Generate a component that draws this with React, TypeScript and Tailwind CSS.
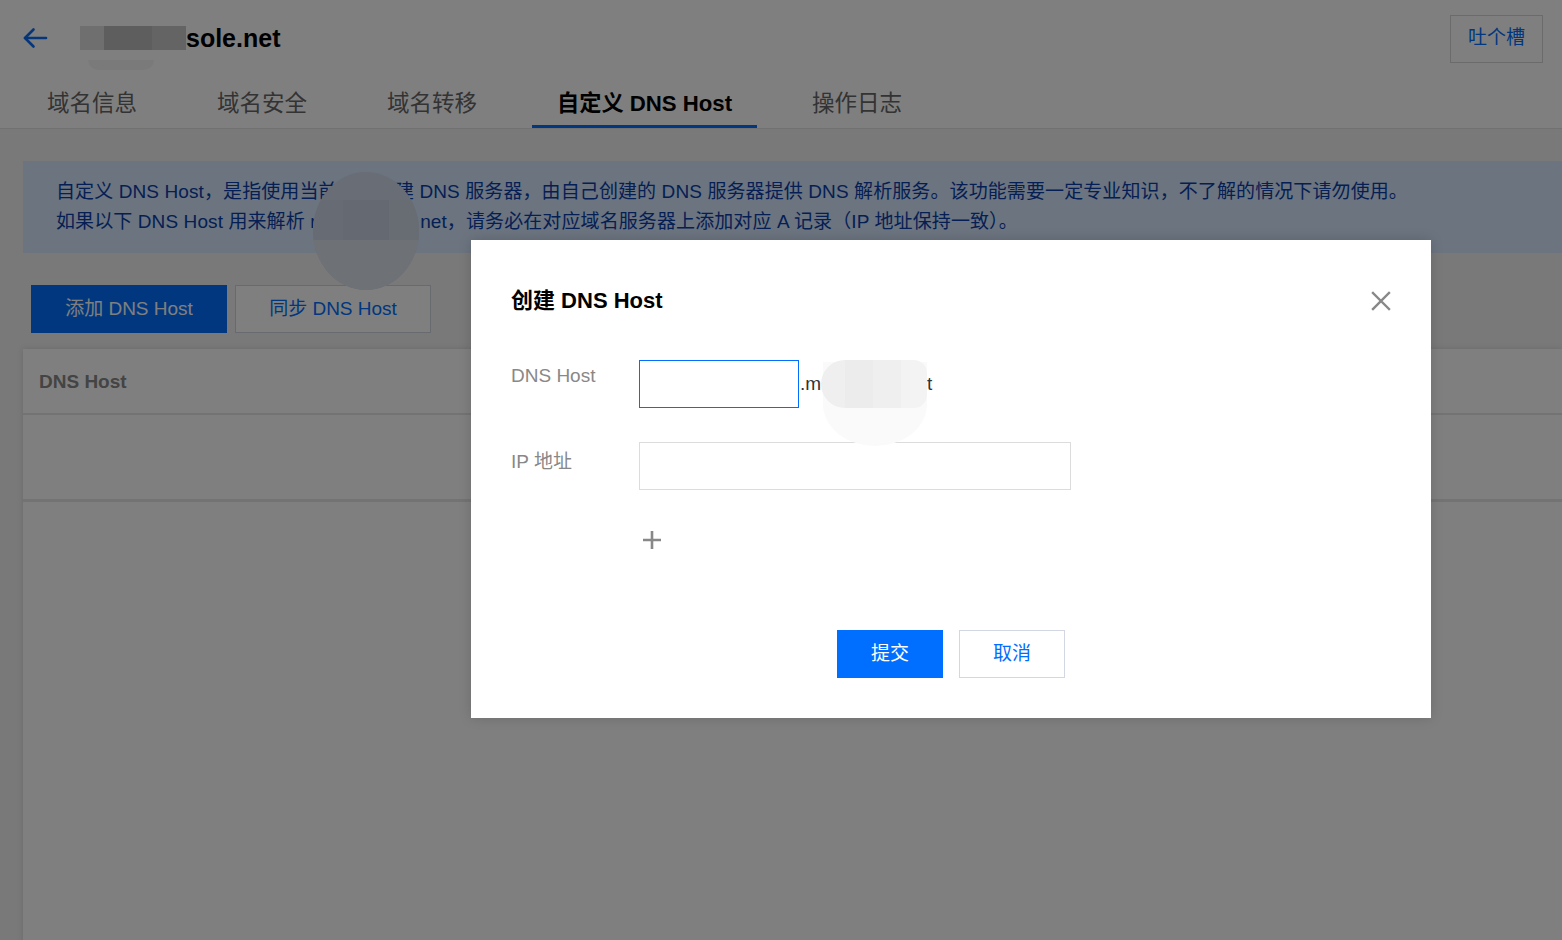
import React from "react";

const F = "font-['Liberation_Sans','Noto_Sans_CJK_SC',sans-serif]";

function Tabs() {
  const tabs = ["域名信息", "域名安全", "域名转移", "自定义 DNS Host", "操作日志"];
  return (
    <div className="flex h-[52px] gap-[30px] pl-[22px]">
      {tabs.map((t, i) => (
        <div
          key={t}
          className={
            i === 3
              ? "flex items-center px-[25px] text-[22.2px] font-bold text-black border-b-[3px] border-[#006eff] pt-[6px]"
              : "flex items-center px-[25px] text-[22.5px] text-[#666] pt-[6px] border-b-[3px] border-transparent"
          }
        >
          {t}
        </div>
      ))}
    </div>
  );
}

export default function App() {
  return (
    <div className={`${F} relative w-full h-[940px] overflow-hidden bg-[#f2f2f2]`}>
      {/* header */}
      <div className="bg-white border-b border-[#e2e2e2] h-[129px] flex flex-col">
        <div className="h-[76px] flex items-center pl-[22px] pr-[19px]">
          <svg width="26" height="22" viewBox="0 0 26 22" fill="none" stroke="#0a6cf5" strokeWidth="2.6" strokeLinecap="round" strokeLinejoin="round">
            <path d="M24 11H3" />
            <path d="M11.5 2.5L3 11l8.5 8.5" />
          </svg>
          <div className="ml-[32px] flex items-center relative">
            <div className="flex h-[24px]">
              <div className="w-[24px] bg-[#dedede]" />
              <div className="w-[48px] bg-[#bcbcbc]" />
              <div className="w-[34px] bg-[#c8c8c8]" />
            </div>
            <span className="text-[25px] font-bold text-black leading-none">sole.net</span>
            <div className="absolute left-[8px] top-[34px] w-[66px] h-[10px] rounded-b-full bg-[#f5f5f5]" />
          </div>
          <div className="ml-auto h-[48px] w-[93px] border border-[#d6d6d6] flex items-center justify-center text-[19px] text-[#006eff] mt-[1px]">
            吐个槽
          </div>
        </div>
        <Tabs />
      </div>

      {/* body */}
      <div className="pl-[23px] pt-[32px] relative">
        <div className="bg-[#d6e8ff] text-[#0a3ea8] text-[19px] leading-[30px] pl-[33px] pt-[16px] pb-[16px] tracking-[0.1px] relative">
          <div className="whitespace-nowrap">
            自定义 DNS Host，是指使用当前域名创建 DNS 服务器，由自己创建的 DNS 服务器提供 DNS 解析服务。该功能需要一定专业知识，不了解的情况下请勿使用。
          </div>
          <div className="whitespace-nowrap">
            如果以下 DNS Host 用来解析 m<span className="inline-block w-[94px]" />net，请务必在对应域名服务器上添加对应 A 记录（IP 地址保持一致）。
          </div>
          <div className="absolute left-[290px] top-[11px] w-[106px] h-[118px] rounded-[50%] bg-[#d2dbea] overflow-hidden flex flex-col">
            <div className="flex h-[40px] mt-[28px]">
              <div className="w-[30px] bg-[#cfd8e8]" />
              <div className="w-[46px] bg-[#cbd4e4]" />
              <div className="w-[30px] bg-[#d0d8e7]" />
            </div>
            <div className="flex-1 bg-[#dde2ea]" />
          </div>
        </div>

        <div className="flex gap-[8px] mt-[32px] ml-[8px]">
          <div className="w-[196px] h-[48px] bg-[#006eff] text-white text-[19px] flex items-center justify-center">添加 DNS Host</div>
          <div className="w-[196px] h-[48px] bg-white border border-[#cfd5de] text-[#006eff] text-[19px] flex items-center justify-center">同步 DNS Host</div>
        </div>

        <div className="mt-[16px] bg-white shadow-[0_0_6px_rgba(0,0,0,0.12)] h-[600px]">
          <div className="h-[66px] flex items-center pl-[16px] pt-[2px] border-b-2 border-[#e6e6e6] text-[19px] font-bold text-[#888]">
            DNS Host
          </div>
          <div className="h-[87px] border-b-[3px] border-[#e6e6e6]" />
        </div>
      </div>

      {/* overlay */}
      <div className="absolute inset-0 bg-black/50" />

      {/* modal */}
      <div className="absolute left-[471px] top-[240px] w-[960px] h-[478px] bg-white shadow-[0_0_12px_rgba(0,0,0,0.15)] px-[40px] pt-[45px] flex flex-col">
        <div className="flex items-center justify-between">
          <div className="text-[22px] font-bold text-black leading-[32px]">创建 DNS Host</div>
          <svg width="20" height="20" viewBox="0 0 20 20" stroke="#888" strokeWidth="2.4" strokeLinecap="square">
            <path d="M2 2L18 18M18 2L2 18" />
          </svg>
        </div>

        <div className="mt-[43px] flex">
          <div className="w-[128px] text-[19px] text-[#888] leading-[30px] pt-[1px]">DNS Host</div>
          <div className="flex items-center relative">
            <div className="w-[160px] h-[48px] border border-[#006eff]" />
            <span className="text-[19px] text-[#333] ml-[1px]">.m</span>
            <span className="inline-block w-[106px]" />
            <span className="text-[19px] text-[#333]">t</span>
            <div className="absolute left-[184px] top-[2px] w-[104px] h-[84px] rounded-b-[50%] bg-[#fafafa]" />
            <div className="absolute left-[182px] top-0 w-[106px] h-[48px] rounded-l-[40px] rounded-r-[22px] overflow-hidden flex">
              <div className="w-[24px] bg-[#efefef]" />
              <div className="w-[28px] bg-[#ececec]" />
              <div className="w-[28px] bg-[#efefef]" />
              <div className="w-[26px] bg-[#f3f3f3]" />
            </div>
          </div>
        </div>

        <div className="mt-[34px] flex">
          <div className="w-[128px] text-[19px] text-[#888] leading-[30px] pt-[5px]">IP 地址</div>
          <div className="w-[432px] h-[48px] border border-[#dcdcdc]" />
        </div>

        <div className="mt-[41px] ml-[132px]">
          <svg width="18" height="18" viewBox="0 0 18 18" stroke="#888" strokeWidth="2.6">
            <path d="M9 0V18M0 9H18" />
          </svg>
        </div>

        <div className="mt-auto mb-[40px] flex justify-center gap-[16px]">
          <div className="w-[106px] h-[48px] bg-[#006eff] text-white text-[19px] flex items-center justify-center">提交</div>
          <div className="w-[106px] h-[48px] bg-white border border-[#d2d8e2] text-[#006eff] text-[19px] flex items-center justify-center">取消</div>
        </div>
      </div>
    </div>
  );
}
